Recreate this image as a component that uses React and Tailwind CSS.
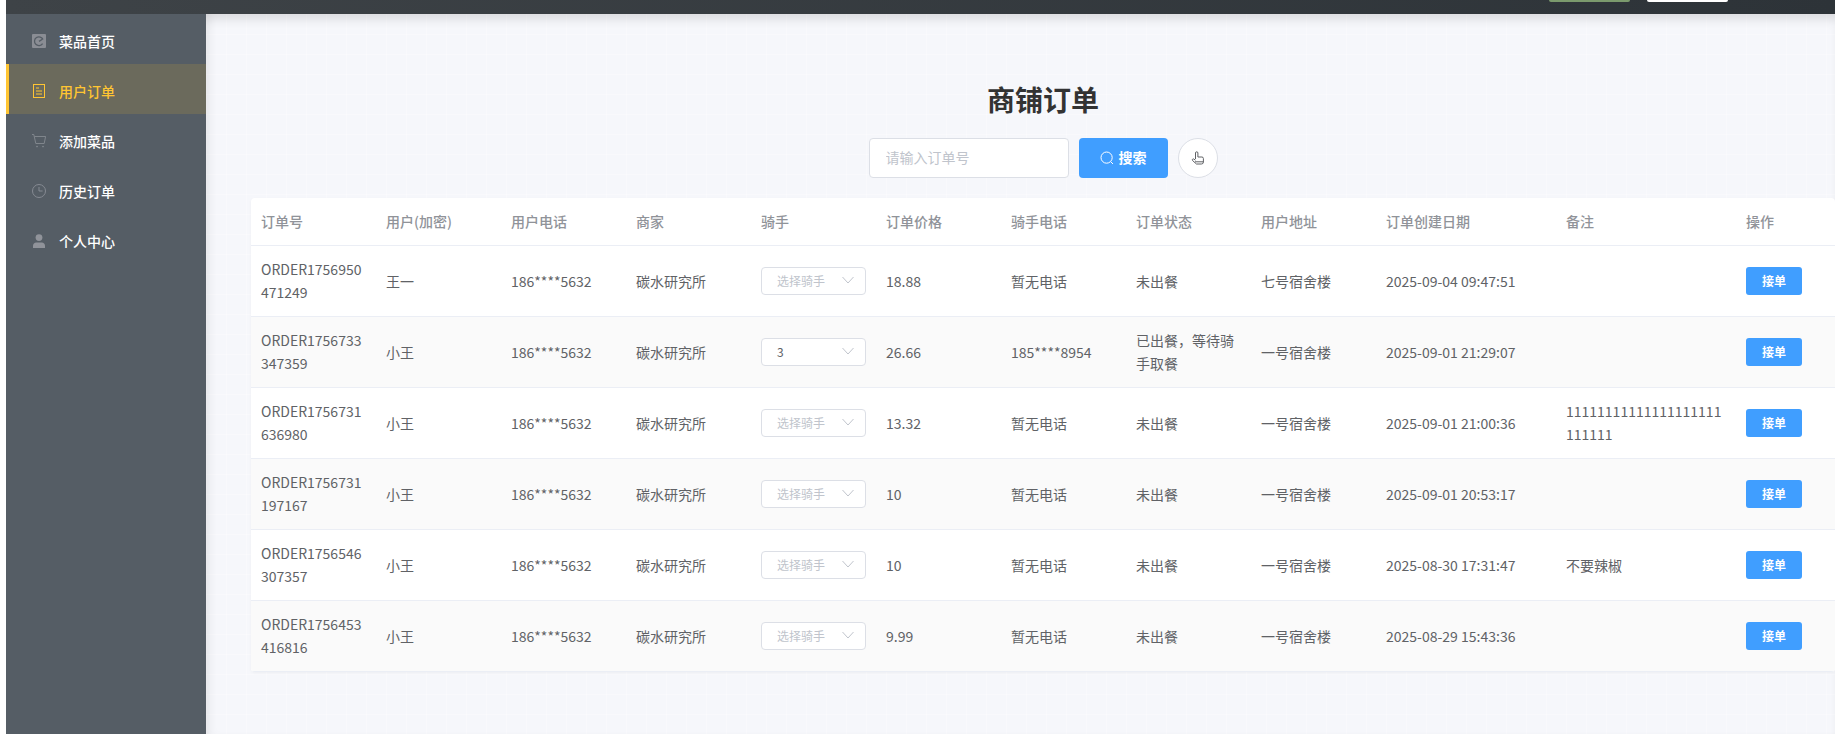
import React from 'react';

const DashIcon = () => (
  <svg width="14" height="14" viewBox="0 0 14 14" className="text-[#8a8d94]">
    <rect width="14" height="14" rx="1" fill="currentColor" />
    <path d="M10.6 9.6A4.4 4.4 0 1 1 11 5.6" fill="none" stroke="#555d65" strokeWidth="1.3" />
    <path d="M7 7.4 10.4 5.2" fill="none" stroke="#555d65" strokeWidth="1.3" />
  </svg>
);

const OrderIcon = () => (
  <svg width="14" height="14" viewBox="0 0 14 14" fill="none" stroke="currentColor" strokeWidth="1">
    <rect x="1.5" y="0.5" width="11" height="13" />
    <path d="M4 4h3M4 7h6M4 10h6" />
  </svg>
);

const CartIcon = () => (
  <svg width="14" height="14" viewBox="0 0 14 14" fill="none" stroke="#8b9097" strokeWidth="0.8">
    <path d="M0 0.5h1.8l2 9h8.4l1.4-7H2.6" />
    <circle cx="5" cy="12.6" r="0.5" />
    <circle cx="11" cy="12.6" r="0.5" />
  </svg>
);

const ClockIcon = () => (
  <svg width="14" height="14" viewBox="0 0 14 14" fill="none" stroke="#8b9097" strokeWidth="0.9">
    <circle cx="7" cy="7" r="6.5" />
    <path d="M7 3v4h3.6" />
  </svg>
);

const UserIcon = () => (
  <svg width="14" height="14" viewBox="0 0 14 14" fill="#90939a">
    <circle cx="7" cy="3.6" r="3.4" />
    <path d="M1 14v-2.4C1 9.8 2.4 8.4 4.2 8.4h5.6c1.8 0 3.2 1.4 3.2 3.2V14z" />
  </svg>
);

const SearchIcon = () => (
  <svg width="14" height="14" viewBox="0 0 14 14" fill="none" stroke="currentColor" strokeWidth="1">
    <circle cx="6.6" cy="6.6" r="5.6" />
    <path d="M10.8 10.8 13 13" />
  </svg>
);

const ThumbIcon = () => (
  <svg width="14" height="14" viewBox="0 0 14 14" fill="none" stroke="currentColor" strokeWidth="1">
    <path d="M4.5 8V2a1.2 1.2 0 0 1 2.4 0v4h4a1.5 1.5 0 0 1 1.5 1.5V11a2 2 0 0 1-2 2H5.5L1.5 9.5a1 1 0 0 1 1.4-1.4L4.5 9.2" />
    <path d="M4 10.8h8.4" />
  </svg>
);

const ArrowIcon = () => (
  <svg width="12" height="8" viewBox="0 0 12 8" fill="none" stroke="#c0c4cc" strokeWidth="1">
    <path d="M0.5 1 6 7l5.5-6" />
  </svg>
);

const menus = [
  { icon: DashIcon, label: '菜品首页' },
  { icon: OrderIcon, label: '用户订单', active: true },
  { icon: CartIcon, label: '添加菜品' },
  { icon: ClockIcon, label: '历史订单' },
  { icon: UserIcon, label: '个人中心' },
];

const columns = ['订单号', '用户(加密)', '用户电话', '商家', '骑手', '订单价格', '骑手电话', '订单状态', '用户地址', '订单创建日期', '备注', '操作'];

const orders = [
  { no: 'ORDER1756950471249', user: '王一', rider: '', price: '18.88', riderTel: '暂无电话', status: '未出餐', addr: '七号宿舍楼', date: '2025-09-04 09:47:51', note: '' },
  { no: 'ORDER1756733347359', user: '小王', rider: '3', price: '26.66', riderTel: '185****8954', status: '已出餐，等待骑手取餐', addr: '一号宿舍楼', date: '2025-09-01 21:29:07', note: '' },
  { no: 'ORDER1756731636980', user: '小王', rider: '', price: '13.32', riderTel: '暂无电话', status: '未出餐', addr: '一号宿舍楼', date: '2025-09-01 21:00:36', note: '11111111111111111111111111' },
  { no: 'ORDER1756731197167', user: '小王', rider: '', price: '10', riderTel: '暂无电话', status: '未出餐', addr: '一号宿舍楼', date: '2025-09-01 20:53:17', note: '' },
  { no: 'ORDER1756546307357', user: '小王', rider: '', price: '10', riderTel: '暂无电话', status: '未出餐', addr: '一号宿舍楼', date: '2025-08-30 17:31:47', note: '不要辣椒' },
  { no: 'ORDER1756453416816', user: '小王', rider: '', price: '9.99', riderTel: '暂无电话', status: '未出餐', addr: '一号宿舍楼', date: '2025-08-29 15:43:36', note: '' },
];

const cell = 'px-[10px] py-[12px] break-all border-b border-[#ebeef5]';

const App = () => {
  return (
    <div className="h-screen w-full overflow-hidden bg-white pl-[6px] font-['Noto_Sans_CJK_SC','Noto_Sans',sans-serif]">
      {/* Top bar, scrolled almost out of view */}
      <div className="flex h-[14px] items-end justify-end bg-gradient-to-r from-[#3e4347] to-[#2d3338] pr-[107px]">
        <div className="mb-[12px] flex gap-[17px]">
          <div className="h-[2px] w-[81px] rounded-b-[2px] bg-[#7b9a6d]" />
          <div className="h-[2px] w-[81px] rounded-b-[2px] bg-white" />
        </div>
      </div>

      <div className="flex h-[720px]">
        {/* Sidebar */}
        <aside className="w-[200px] shrink-0 bg-[#555d65]">
          {menus.map((m) => (
            <div
              key={m.label}
              className={`flex h-[50px] items-center gap-[13px] pt-[4px] text-[14px] font-medium ${
                m.active ? 'border-l-[3px] border-[#ffc532] bg-[#6b6a5c] pl-[23px] text-[#ffc532]' : 'pl-[26px] text-white'
              }`}
            >
              <span className="flex w-[14px] justify-center">
                <m.icon />
              </span>
              {m.label}
            </div>
          ))}
        </aside>

        {/* Content */}
        <main className="min-w-0 flex-1 bg-[#f6f7fb] bg-[linear-gradient(rgba(255,255,255,0.3)_1px,transparent_1px),linear-gradient(90deg,rgba(255,255,255,0.3)_1px,transparent_1px)] bg-[size:20px_20px] pt-[63px] pl-[45px] shadow-[inset_0_10px_10px_-4px_rgba(0,0,0,0.1),inset_8px_0_8px_-4px_rgba(0,0,0,0.06)]">
          <h1 className="text-center text-[28px] leading-[44px] font-bold text-[#333333]">商铺订单</h1>
          <div className="mt-[17px] flex justify-center gap-[10px]">
            <input
              placeholder="请输入订单号"
              className="h-[40px] w-[200px] rounded-[4px] border border-[#dcdfe6] bg-white px-[16px] pb-[2px] text-[14px] text-[#606266] outline-none placeholder:text-[#c0c4cc]"
            />
            <button className="flex h-[40px] w-[89px] items-center justify-center gap-[5px] rounded-[4px] bg-[#409eff] pb-[1px] text-[14px] font-bold text-white">
              <SearchIcon />
              搜索
            </button>
            <button className="flex h-[40px] w-[40px] items-center justify-center rounded-full border border-[#dcdfe6] bg-white text-[#606266]">
              <ThumbIcon />
            </button>
          </div>

          <div className="mt-[20px] overflow-hidden rounded-[4px] bg-white shadow-[0_1px_3px_rgba(0,0,0,0.04)]">
            <table className="w-full table-fixed border-collapse text-left text-[14px] leading-[23px] text-[#606266]">
              <colgroup>
                {columns.map((c, i) => (
                  <col key={c} className={i === 9 || i === 10 ? 'w-[180px]' : i === 11 ? '' : 'w-[125px]'} />
                ))}
              </colgroup>
              <thead>
                <tr>
                  {columns.map((c) => (
                    <th key={c} className={`${cell} font-medium text-[#909399]`}>
                      {c}
                    </th>
                  ))}
                </tr>
              </thead>
              <tbody>
                {orders.map((o, i) => (
                  <tr key={o.no} className={i % 2 === 1 ? 'bg-[#fafafa]' : 'bg-white'}>
                    <td className={cell}>{o.no}</td>
                    <td className={cell}>{o.user}</td>
                    <td className={cell}>186****5632</td>
                    <td className={cell}>碳水研究所</td>
                    <td className={cell}>
                      <div className="flex h-[28px] w-[105px] items-center justify-between rounded-[4px] border border-[#dcdfe6] bg-white pr-[11px] pb-[2px] pl-[15px] text-[12px]">
                        <span className={o.rider ? 'text-[#606266]' : 'text-[#c0c4cc]'}>{o.rider || '选择骑手'}</span>
                        <ArrowIcon />
                      </div>
                    </td>
                    <td className={cell}>{o.price}</td>
                    <td className={cell}>{o.riderTel}</td>
                    <td className={cell}>{o.status}</td>
                    <td className={cell}>{o.addr}</td>
                    <td className={cell}>{o.date}</td>
                    <td className={cell}>{o.note}</td>
                    <td className={cell}>
                      <button className="h-[28px] w-[56px] rounded-[3px] bg-[#409eff] pb-[2px] text-[12px] font-bold text-white">接单</button>
                    </td>
                  </tr>
                ))}
              </tbody>
            </table>
          </div>
        </main>
      </div>
    </div>
  );
};

export default App;
